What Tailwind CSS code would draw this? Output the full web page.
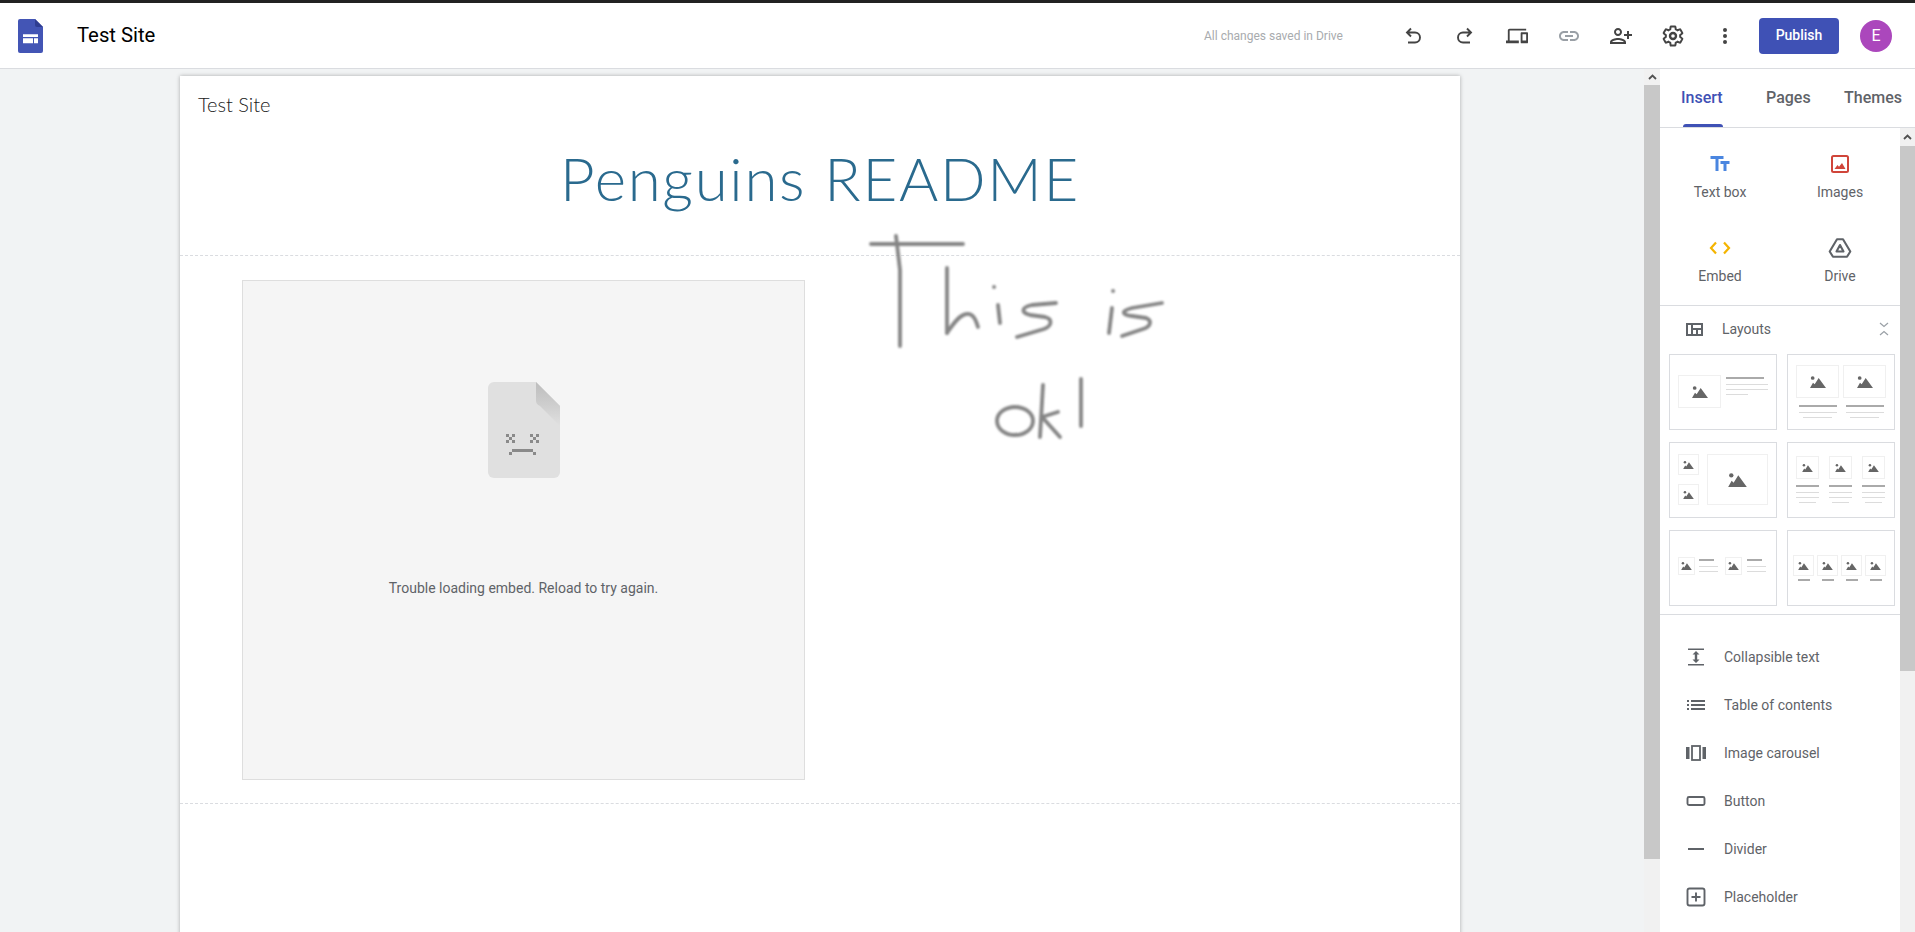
<!DOCTYPE html>
<html lang="en">
  <head>
    <meta charset="UTF-8" />
    <meta name="viewport" content="width=device-width, initial-scale=1.0" />
    <script src="https://cdn.jsdelivr.net/npm/@tailwindcss/browser@4"></script>
    <title>Test Site - Google Sites</title>
  </head>
  <body class="h-screen overflow-hidden bg-white font-['Roboto',sans-serif]">
    <svg class="hidden">
      <symbol id="mtn" viewBox="0 0 24 18">
        <circle cx="4" cy="3" r="2.800" fill="#666" />
        <path d="M0 18 4.500 10 7 12.500 13 3 24 18Z" fill="#666" />
      </symbol>
    </svg>

    <div class="flex flex-col h-[932px]">
      <div class="h-[3px] bg-[#222] shrink-0"></div>

      <!-- top bar -->
      <header class="flex items-center h-[66px] shrink-0 border-b border-[#dadce0]">
        <svg class="ml-[18px] w-[25px] h-[34px]" viewBox="0 0 25 34">
          <path d="M2 0H17L25 8V32a2 2 0 0 1-2 2H2a2 2 0 0 1-2-2V2a2 2 0 0 1 2-2Z" fill="#4355b5" />
          <path d="M17 0 25 8H19a2 2 0 0 1-2-2Z" fill="#2f3d91" />
          <path d="M5 15.300H20V18H5ZM5 19.300H15V24.300H5ZM16 19.300H20V24.300H16Z" fill="#fff" />
        </svg>
        <span class="ml-[34px] w-[80px] text-[20.300px] text-black whitespace-nowrap">Test Site</span>
        <span class="ml-[1047px] w-[183px] text-[12px] text-[#a8abae]">All changes saved in Drive</span>

        <div class="flex items-center text-[#444]">
          <button class="w-[52px] flex justify-center">
            <svg class="w-6 h-6" viewBox="0 0 24 24" fill="none" stroke="currentColor" stroke-width="1.900"><path d="M10 4.500 6 8.500l4 4M6 8.500h8a5 5 0 0 1 0 10H7" /></svg>
          </button>
          <button class="w-[52px] flex justify-center">
            <svg class="w-6 h-6" viewBox="0 0 24 24" fill="none" stroke="currentColor" stroke-width="1.900"><path d="M14 4.500l4 4-4 4M18 8.500h-8a5 5 0 0 0 0 10h7" /></svg>
          </button>
          <button class="w-[52px] h-6 flex items-center justify-center">
            <svg class="w-[22px] h-[22px]" viewBox="0 0 24 24" fill="currentColor"><path d="M4 6h18V4H4c-1.100 0-2 .9-2 2v11H0v3h14v-3H4V6zm19 2h-6c-.55 0-1 .45-1 1v10c0 .55.45 1 1 1h6c.55 0 1-.45 1-1V9c0-.55-.45-1-1-1zm-1 9h-4v-7h4v7z" /></svg>
          </button>
          <button class="w-[52px] flex justify-center text-[#9aa0a6]">
            <svg class="w-6 h-6" viewBox="0 0 24 24" fill="currentColor"><path d="M3.900 12c0-1.710 1.390-3.100 3.100-3.100h4V7H7c-2.760 0-5 2.240-5 5s2.240 5 5 5h4v-1.900H7c-1.710 0-3.100-1.390-3.100-3.100zM8 13h8v-2H8v2zm9-6h-4v1.900h4c1.710 0 3.100 1.390 3.100 3.100s-1.390 3.100-3.100 3.100h-4V17h4c2.760 0 5-2.240 5-5s-2.240-5-5-5z" /></svg>
          </button>
          <button class="w-[52px] flex justify-center">
            <svg class="w-6 h-6" viewBox="0 0 24 24" fill="currentColor"><path transform="matrix(-1 0 0 1 24 0)" d="M15 12c2.210 0 4-1.790 4-4s-1.790-4-4-4-4 1.790-4 4 1.790 4 4 4zm0-6c1.100 0 2 .9 2 2s-.9 2-2 2-2-.9-2-2 .9-2 2-2zm0 8c-2.670 0-8 1.340-8 4v2h16v-2c0-2.660-5.330-4-8-4zm-6 4c.22-.72 3.310-2 6-2 2.700 0 5.800 1.290 6 2H9zm-3-3v-3h3v-2H6V7H4v3H1v2h3v3h2z" /></svg>
          </button>
          <button class="w-[52px] flex justify-center">
            <svg class="w-6 h-6" viewBox="0 0 24 24" fill="none" stroke="currentColor" stroke-width="2"><path d="M19.140 12.940c.04-.3.06-.61.06-.94 0-.32-.02-.64-.07-.94l2.030-1.580c.18-.14.23-.41.12-.61l-1.920-3.320c-.12-.22-.37-.29-.59-.22l-2.390.96c-.5-.38-1.030-.7-1.620-.94l-.36-2.540c-.04-.24-.24-.41-.48-.41h-3.840c-.24 0-.43.17-.47.41l-.36 2.540c-.59.24-1.130.57-1.620.94l-2.390-.96c-.22-.08-.47 0-.59.22L2.740 8.870c-.12.21-.08.47.12.61l2.030 1.580c-.05.3-.09.63-.09.94s.02.64.07.94l-2.030 1.580c-.18.14-.23.41-.12.61l1.920 3.320c.12.22.37.29.59.22l2.390-.96c.5.38 1.030.7 1.620.94l.36 2.540c.05.24.24.41.48.41h3.840c.24 0 .44-.17.47-.41l.36-2.540c.59-.24 1.130-.56 1.620-.94l2.390.96c.22.08.47 0 .59-.22l1.920-3.320c.12-.22.07-.47-.12-.61l-2.010-1.580z" /><circle cx="12" cy="12" r="3" stroke-width="2.400" /></svg>
          </button>
          <button class="w-[52px] flex justify-center">
            <svg class="w-6 h-6" viewBox="0 0 24 24" fill="currentColor"><circle cx="12" cy="6" r="2" /><circle cx="12" cy="12" r="2" /><circle cx="12" cy="18" r="2" /></svg>
          </button>
        </div>

        <button class="ml-[8px] w-[80px] h-[36px] rounded bg-[#3f51b5] text-white text-[14px] font-medium">Publish</button>
        <div class="ml-[21px] w-8 h-8 rounded-full bg-[#ab47bc] text-white text-[16px] flex items-center justify-center">E</div>
      </header>

      <div class="flex flex-1 min-h-0">
        <!-- editor canvas -->
        <main class="w-[1644px] shrink-0 bg-[#f1f3f4] pl-[180px] pt-[7px] overflow-hidden">
          <div class="relative w-[1280px] h-[900px] bg-white shadow-[0_0_4px_rgba(0,0,0,0.3)] font-['Lato',sans-serif]">
            <div class="h-[180px] border-b border-dashed border-[#dadce0]">
              <p class="pl-[18px] pt-[14px] text-[20px] leading-[28px] font-light text-[#212121]">Test Site</p>
              <h1 class="mt-[24px] text-center text-[60px] leading-[72px] font-light tracking-[1.700px] text-[#2a6a8e]">Penguins README</h1>
            </div>

            <div class="h-[548px] pl-[62px] pt-[24px] border-b border-dashed border-[#dadce0]">
              <div class="w-[563px] h-[500px] bg-[#f5f5f5] border border-[#dedede] flex flex-col items-center font-['Roboto',sans-serif]">
                <svg class="mt-[101px] w-[72px] h-[96px]" viewBox="0 0 72 96">
                  <defs>
                    <linearGradient id="fold" x1="0" y1="0" x2="0" y2="1">
                      <stop offset="0" stop-color="#bdbdbd" />
                      <stop offset="0.55" stop-color="#cfcfcf" />
                      <stop offset="1" stop-color="#e0e0e0" />
                    </linearGradient>
                  </defs>
                  <path d="M6 0H48L72 24V90a6 6 0 0 1-6 6H6a6 6 0 0 1-6-6V6a6 6 0 0 1 6-6Z" fill="#e0e0e0" />
                  <path d="M48 0 72 24V44L52 24a6 6 0 0 1-4-6Z" fill="url(#fold)" />
                  <g fill="#8a8a8a">
                    <path d="M18 52h3v3h-3zM24 52h3v3h-3zM21 55h3v3h-3zM18 58h3v3h-3zM24 58h3v3h-3z" />
                    <path d="M42 52h3v3h-3zM48 52h3v3h-3zM45 55h3v3h-3zM42 58h3v3h-3zM48 58h3v3h-3z" />
                    <path d="M24 67h21v3H24zM21 70h3v3h-3zM45 70h3v3h-3z" />
                  </g>
                </svg>
                <p class="mt-[100px] text-[14px] leading-5 text-[#5f6368]">Trouble loading embed. Reload to try again.</p>
              </div>
            </div>

            <!-- pen drawing laid over the sections -->
            <svg class="absolute left-0 top-0 pointer-events-none" width="1280" height="500" viewBox="180 76 1280 500" fill="none" stroke="#858585" stroke-width="3.800" stroke-linecap="round" stroke-linejoin="round">
              <defs>
                <filter id="pen" x="-5%" y="-5%" width="110%" height="110%"><feGaussianBlur stdDeviation="0.800" /></filter>
              </defs>
              <g filter="url(#pen)">
                <path d="M871 244H963" />
                <path d="M896 236 900 270V346" />
                <path d="M947 268V333" />
                <path d="M947 333C953 324 960 314 967 314 973 313 976 320 978 327" />
                <path d="M998 305 1000 323" />
                <path d="M994 287h.1" />
                <path d="M1056 303 1032 305C1022 307 1020 312 1030 315L1045 317C1053 319 1052 326 1044 329L1017 337" />
                <path d="M1113 291h.1" />
                <path d="M1112 308 1109 333" />
                <path d="M1162 303 1132 308C1120 311 1122 315 1132 316L1146 318C1153 321 1150 327 1143 329L1122 336" />
                <ellipse cx="1015" cy="421" rx="18" ry="14" />
                <path d="M1043 385 1040 437" />
                <path d="M1058 412 1042 417 1060 437" />
                <path d="M1081 379V426" />
              </g>
            </svg>
          </div>
        </main>

        <!-- outer scrollbar -->
        <div class="w-4 shrink-0 flex flex-col bg-[#f1f1f1]">
          <div class="h-4 flex items-center justify-center">
            <svg class="w-[9px] h-[6px]" viewBox="0 0 9 6" fill="none" stroke="#505050" stroke-width="1.800"><path d="M1 5 4.500 1.500 8 5" /></svg>
          </div>
          <div class="h-[774px] bg-[#c8c8c8]"></div>
        </div>

        <!-- side panel -->
        <aside class="w-[255px] shrink-0 flex flex-col min-h-0">
          <nav class="flex h-[59px] shrink-0 border-b border-[#dadce0] text-[16px] font-medium text-[#5f6368]">
            <div class="relative ml-[21px] w-[85px] flex items-center text-[#3f51b5]">
              Insert
              <span class="absolute left-[2px] bottom-0 w-[40px] h-[3px] rounded-t bg-[#3f51b5]"></span>
            </div>
            <div class="w-[78px] flex items-center">Pages</div>
            <div class="flex items-center">Themes</div>
          </nav>

          <div class="flex flex-1 min-h-0">
            <div class="w-[240px] shrink-0 text-[#5f6368] text-[14px]">
              <div class="grid grid-cols-2 pb-[9px] border-b border-[#dadce0]">
                <div class="h-[84px] pt-[24px] flex flex-col items-center gap-[6px]">
                  <svg class="w-[26px] h-6" viewBox="0 0 24 24" fill="#4a86e0"><path d="M2.500 4v3h5v12h3V7h5V4h-13zm19 5h-9v3h3v7h3v-7h3V9z" /></svg>
                  <span class="leading-5">Text box</span>
                </div>
                <div class="h-[84px] pt-[24px] flex flex-col items-center gap-[6px]">
                  <svg class="w-6 h-6" viewBox="0 0 24 24"><rect x="4" y="4" width="16" height="16" rx="1.500" fill="none" stroke="#d0453a" stroke-width="2" /><path d="M6.500 17 9.500 13 11 14.800 14 11 17.500 17Z" fill="#d0453a" /></svg>
                  <span class="leading-5">Images</span>
                </div>
                <div class="h-[84px] pt-[24px] flex flex-col items-center gap-[6px]">
                  <svg class="w-6 h-6" viewBox="0 0 24 24" fill="none" stroke="#f4b400" stroke-width="2.200"><path d="M8 6.500 3 12 8 17.500M16 6.500 21 12 16 17.500" /></svg>
                  <span class="leading-5">Embed</span>
                </div>
                <div class="h-[84px] pt-[24px] flex flex-col items-center gap-[6px]">
                  <svg class="w-6 h-6" viewBox="0 0 24 24" fill="none" stroke="#5f6368" stroke-width="2.100" stroke-linejoin="round"><path d="M9 3.200h6L22.300 15.500 19 20.800H5L1.700 15.500Z" /><path d="M12 9 15.500 15.500H8.500Z" /></svg>
                  <span class="leading-5">Drive</span>
                </div>
              </div>

              <div class="flex items-center h-[46px] pl-[26px] pr-[11px]">
                <svg class="w-[17px] h-[13px]" viewBox="0 0 17 13" fill="#5f6368"><path d="M0 0H17V13H0ZM2 2V11H5V2ZM7 2V5H15V2ZM7 7V11H10V7ZM12 7V11H15V7Z" fill-rule="evenodd" /></svg>
                <span class="ml-[19px] flex-1">Layouts</span>
                <svg class="w-[10px] h-[14px]" viewBox="0 0 10 14" fill="none" stroke="#9aa0a6" stroke-width="1.200"><path d="M1 1 5 4.500 9 1M1 13 5 9.500 9 13" /></svg>
              </div>

              <!-- layout thumbnails -->
              <div class="grid grid-cols-[108px_108px] gap-x-[10px] gap-y-[12px] mt-[2px] ml-[9px]">
                <div class="h-[76px] border border-[#dadce0] flex items-start gap-[5px] pl-[8px] pt-[20px]">
                  <div class="w-[43px] h-[33px] border border-[#f0f0f0] flex items-center justify-center shrink-0"><svg class="w-4 h-3"><use href="#mtn" /></svg></div>
                  <div class="w-[42px] flex flex-col">
                    <div class="mt-[2px] w-[38px] h-[2px] bg-[#aaa]"></div>
                    <div class="mt-[5px] h-px bg-[#dcdcdc]"></div>
                    <div class="mt-[4px] h-px bg-[#dcdcdc]"></div>
                    <div class="mt-[4px] w-[22px] h-px bg-[#dcdcdc]"></div>
                  </div>
                </div>
                <div class="h-[76px] border border-[#dadce0] flex gap-[4px] pl-[8px] pt-[10px]">
                  <div class="w-[43px] flex flex-col items-center">
                    <div class="w-[43px] h-[33px] border border-[#f0f0f0] flex items-center justify-center"><svg class="w-4 h-3"><use href="#mtn" /></svg></div>
                    <div class="mt-[7px] w-[38px] h-[2px] bg-[#aaa]"></div>
                    <div class="mt-[5px] w-[38px] h-px bg-[#dcdcdc]"></div>
                    <div class="mt-[4px] w-[29px] h-px bg-[#dcdcdc]"></div>
                  </div>
                  <div class="w-[43px] flex flex-col items-center">
                    <div class="w-[43px] h-[33px] border border-[#f0f0f0] flex items-center justify-center"><svg class="w-4 h-3"><use href="#mtn" /></svg></div>
                    <div class="mt-[7px] w-[38px] h-[2px] bg-[#aaa]"></div>
                    <div class="mt-[5px] w-[38px] h-px bg-[#dcdcdc]"></div>
                    <div class="mt-[4px] w-[29px] h-px bg-[#dcdcdc]"></div>
                  </div>
                </div>

                <div class="h-[76px] border border-[#dadce0] flex gap-[8px] pl-[8px] pt-[11px]">
                  <div class="flex flex-col gap-[9px]">
                    <div class="w-[21px] h-[21px] border border-[#f0f0f0] flex items-center justify-center"><svg class="w-[11px] h-2"><use href="#mtn" /></svg></div>
                    <div class="w-[21px] h-[21px] border border-[#f0f0f0] flex items-center justify-center"><svg class="w-[11px] h-2"><use href="#mtn" /></svg></div>
                  </div>
                  <div class="w-[61px] h-[51px] border border-[#f0f0f0] flex items-center justify-center"><svg class="w-[19px] h-[14px]"><use href="#mtn" /></svg></div>
                </div>
                <div class="h-[76px] border border-[#dadce0] flex gap-[10px] pl-[8px] pt-[13px]">
                  <div class="w-[23px] flex flex-col items-center">
                    <div class="w-[23px] h-[23px] border border-[#f0f0f0] flex items-center justify-center"><svg class="w-[11px] h-2"><use href="#mtn" /></svg></div>
                    <div class="mt-[6px] w-[23px] h-[2px] bg-[#aaa]"></div>
                    <div class="mt-[5px] w-[23px] h-px bg-[#dcdcdc]"></div>
                    <div class="mt-[4px] w-[23px] h-px bg-[#dcdcdc]"></div>
                    <div class="mt-[4px] w-[17px] h-px bg-[#dcdcdc]"></div>
                  </div>
                  <div class="w-[23px] flex flex-col items-center">
                    <div class="w-[23px] h-[23px] border border-[#f0f0f0] flex items-center justify-center"><svg class="w-[11px] h-2"><use href="#mtn" /></svg></div>
                    <div class="mt-[6px] w-[23px] h-[2px] bg-[#aaa]"></div>
                    <div class="mt-[5px] w-[23px] h-px bg-[#dcdcdc]"></div>
                    <div class="mt-[4px] w-[23px] h-px bg-[#dcdcdc]"></div>
                    <div class="mt-[4px] w-[17px] h-px bg-[#dcdcdc]"></div>
                  </div>
                  <div class="w-[23px] flex flex-col items-center">
                    <div class="w-[23px] h-[23px] border border-[#f0f0f0] flex items-center justify-center"><svg class="w-[11px] h-2"><use href="#mtn" /></svg></div>
                    <div class="mt-[6px] w-[23px] h-[2px] bg-[#aaa]"></div>
                    <div class="mt-[5px] w-[23px] h-px bg-[#dcdcdc]"></div>
                    <div class="mt-[4px] w-[23px] h-px bg-[#dcdcdc]"></div>
                    <div class="mt-[4px] w-[17px] h-px bg-[#dcdcdc]"></div>
                  </div>
                </div>

                <div class="h-[76px] border border-[#dadce0] flex items-start pl-[8px] pt-[26px]">
                  <div class="w-[17px] h-[18px] border border-[#f0f0f0] flex items-center justify-center"><svg class="w-[11px] h-2"><use href="#mtn" /></svg></div>
                  <div class="ml-[4px] w-[19px] flex flex-col">
                    <div class="mt-[2px] w-[15px] h-[2px] bg-[#aaa]"></div>
                    <div class="mt-[5px] h-px bg-[#dcdcdc]"></div>
                    <div class="mt-[4px] h-px bg-[#dcdcdc]"></div>
                  </div>
                  <div class="ml-[7px] w-[17px] h-[18px] border border-[#f0f0f0] flex items-center justify-center"><svg class="w-[11px] h-2"><use href="#mtn" /></svg></div>
                  <div class="ml-[5px] w-[19px] flex flex-col">
                    <div class="mt-[2px] w-[15px] h-[2px] bg-[#aaa]"></div>
                    <div class="mt-[5px] h-px bg-[#dcdcdc]"></div>
                    <div class="mt-[4px] h-px bg-[#dcdcdc]"></div>
                  </div>
                </div>
                <div class="h-[76px] border border-[#dadce0] flex gap-[3px] pl-[5px] pt-[24px]">
                  <div class="w-[21px] flex flex-col items-center">
                    <div class="w-[21px] h-[21px] border border-[#f0f0f0] flex items-center justify-center"><svg class="w-[11px] h-2"><use href="#mtn" /></svg></div>
                    <div class="mt-[3px] w-[12px] h-[2px] bg-[#aaa]"></div>
                  </div>
                  <div class="w-[21px] flex flex-col items-center">
                    <div class="w-[21px] h-[21px] border border-[#f0f0f0] flex items-center justify-center"><svg class="w-[11px] h-2"><use href="#mtn" /></svg></div>
                    <div class="mt-[3px] w-[12px] h-[2px] bg-[#aaa]"></div>
                  </div>
                  <div class="w-[21px] flex flex-col items-center">
                    <div class="w-[21px] h-[21px] border border-[#f0f0f0] flex items-center justify-center"><svg class="w-[11px] h-2"><use href="#mtn" /></svg></div>
                    <div class="mt-[3px] w-[12px] h-[2px] bg-[#aaa]"></div>
                  </div>
                  <div class="w-[21px] flex flex-col items-center">
                    <div class="w-[21px] h-[21px] border border-[#f0f0f0] flex items-center justify-center"><svg class="w-[11px] h-2"><use href="#mtn" /></svg></div>
                    <div class="mt-[3px] w-[12px] h-[2px] bg-[#aaa]"></div>
                  </div>
                </div>
              </div>

              <!-- content blocks -->
              <div class="mt-[8px] pt-[18px] border-t border-[#dadce0]">
                <div class="flex items-center h-12 pl-6">
                  <svg class="w-6 h-6" viewBox="0 0 24 24" fill="#5f6368"><path d="M4 3.500H20V5H4ZM4 19H20V20.500H4ZM12 6 15.500 9.500H13.200V14.500H15.500L12 18 8.500 14.500H10.800V9.500H8.500Z" /></svg>
                  <span class="ml-4">Collapsible text</span>
                </div>
                <div class="flex items-center h-12 pl-6">
                  <svg class="w-6 h-6" viewBox="0 0 24 24" fill="#5f6368"><path d="M3 7H5V9H3ZM3 11H5V13H3ZM3 15H5V17H3ZM7 7H21V9H7ZM7 11H21V13H7ZM7 15H21V17H7Z" /></svg>
                  <span class="ml-4">Table of contents</span>
                </div>
                <div class="flex items-center h-12 pl-6">
                  <svg class="w-6 h-6" viewBox="0 0 24 24" fill="#5f6368"><path d="M2 6H5.500V18H2ZM18.500 6H22V18H18.500Z" /><rect x="8" y="5" width="8" height="14" fill="none" stroke="#5f6368" stroke-width="1.800" /></svg>
                  <span class="ml-4">Image carousel</span>
                </div>
                <div class="flex items-center h-12 pl-6">
                  <svg class="w-6 h-6" viewBox="0 0 24 24" fill="none" stroke="#5f6368" stroke-width="1.900"><rect x="3.500" y="8" width="17" height="8" rx="1.500" /></svg>
                  <span class="ml-4">Button</span>
                </div>
                <div class="flex items-center h-12 pl-6">
                  <svg class="w-6 h-6" viewBox="0 0 24 24" fill="#5f6368"><path d="M4 11H20V13H4Z" /></svg>
                  <span class="ml-4">Divider</span>
                </div>
                <div class="flex items-center h-12 pl-6">
                  <svg class="w-6 h-6" viewBox="0 0 24 24" fill="none" stroke="#5f6368" stroke-width="1.900"><rect x="3.500" y="3.500" width="17" height="17" rx="2" /><path d="M12 7.500V16.500M7.500 12H16.500" /></svg>
                  <span class="ml-4">Placeholder</span>
                </div>
              </div>
            </div>

            <!-- panel scrollbar -->
            <div class="w-[15px] shrink-0 flex flex-col bg-[#f1f1f1]">
              <div class="h-[18px] flex items-center justify-center">
                <svg class="w-[9px] h-[6px]" viewBox="0 0 9 6" fill="none" stroke="#505050" stroke-width="1.800"><path d="M1 5 4.500 1.500 8 5" /></svg>
              </div>
              <div class="h-[525px] bg-[#c8c8c8]"></div>
            </div>
          </div>
        </aside>
      </div>
    </div>
  </body>
</html>
